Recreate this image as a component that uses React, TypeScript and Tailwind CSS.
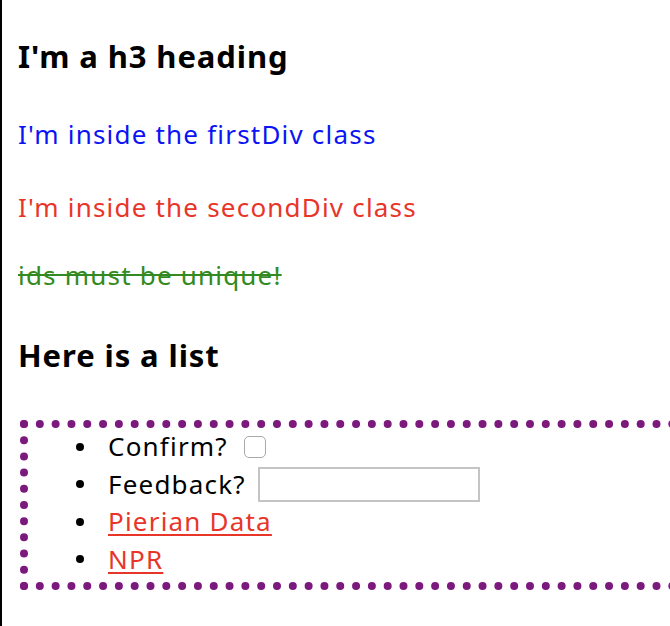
export default function App() {
  return (
    <div className="w-[670px] h-[626px] overflow-hidden bg-white border-l-2 border-black font-['Noto_Sans',sans-serif] text-black">
      <div className="pl-4">
        {/* h3 */}
        <h3 className="mt-[36px] text-[31px] leading-[40px] font-bold tracking-[0.9px]">I'm a h3 heading</h3>

        {/* classes */}
        <p className="mt-[40px] text-[26px] leading-[36px] tracking-[1.2px] text-[#0a14f5]">I'm inside the firstDiv class</p>
        <p className="mt-[37px] text-[26px] leading-[36px] tracking-[1.2px] text-[#e8352a]">I'm inside the secondDiv class</p>
        <p className="mt-[32px] text-[26px] leading-[36px] tracking-[1.2px] text-[#338a22] line-through">ids must be unique!</p>

        <h3 className="mt-[42px] text-[31px] leading-[40px] font-bold tracking-[0.9px]">Here is a list</h3>

        {/* dotted list */}
        <div className="mt-[45px] ml-[2px] w-[720px] border-[8px] border-dotted border-[#7b197d] pb-[4px]">
          <ul className="pl-[48px] text-[26px] leading-[37.5px] tracking-[1.2px]">
            <li className="flex items-center h-[37.5px]">
              <span className="w-[8px] h-[8px] rounded-full bg-black mr-[24px]" />
              <span>Confirm?</span>
              <input
                type="checkbox"
                className="appearance-none ml-[16px] w-[22px] h-[22px] rounded-[5px] border border-[#a9a9a9] bg-white"
              />
            </li>
            <li className="flex items-center h-[37.5px]">
              <span className="w-[8px] h-[8px] rounded-full bg-black mr-[24px]" />
              <span>Feedback?</span>
              <input
                type="text"
                className="ml-[12px] w-[222px] h-[35px] border-2 border-[#c4c4c4] bg-white"
              />
            </li>
            <li className="flex items-center h-[37.5px]">
              <span className="w-[8px] h-[8px] rounded-full bg-black mr-[24px]" />
              <a href="#" className="text-[#e8352a] underline decoration-2 underline-offset-[3px]">Pierian Data</a>
            </li>
            <li className="flex items-center h-[37.5px]">
              <span className="w-[8px] h-[8px] rounded-full bg-black mr-[24px]" />
              <a href="#" className="text-[#e8352a] underline decoration-2 underline-offset-[3px]">NPR</a>
            </li>
          </ul>
        </div>
      </div>
    </div>
  );
}
